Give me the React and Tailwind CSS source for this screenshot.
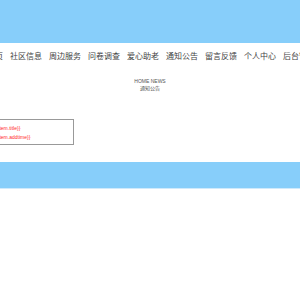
import React from 'react';

const navItems = ['首页', '社区信息', '周边服务', '问卷调查', '爱心助老', '通知公告', '留言反馈', '个人中心', '后台管理'];

const news = [{ title: '{{item.title}}', addtime: '{{item.addtime}}' }];

export default function App() {
  return (
    <div className="min-h-[300px] w-[300px] overflow-hidden bg-white font-['Liberation_Sans','Noto_Sans_CJK_SC',sans-serif]">
      {/* top banner */}
      <div className="h-[43px] w-full bg-[#87cefa]" />

      {/* nav */}
      <div className="flex h-[27px] items-center justify-center whitespace-nowrap pl-[2px]">
        <div className="flex shrink-0 gap-[7px] text-[8px] leading-none text-[#444]">
          {navItems.map((item) => (
            <span key={item}>{item}</span>
          ))}
        </div>
      </div>

      {/* title */}
      <div className="mt-[8px] flex flex-col items-center text-[5px] leading-[7px] text-[#555]">
        <span>HOME NEWS</span>
        <span>通知公告</span>
      </div>

      {/* list */}
      <div className="mt-[27px] flex">
        {news.map((item, i) => (
          <div
            key={i}
            className="-ml-[22px] flex h-[26px] w-[96px] flex-col justify-center gap-[3px] border border-[#999] pl-[16px] text-[5px] leading-[6px] text-[#ff2a2a]"
          >
            <span>{item.title}</span>
            <span>{item.addtime}</span>
          </div>
        ))}
      </div>

      {/* footer banner */}
      <div className="mt-[17px] h-[27px] w-full border-b border-[#cfeafc] bg-[#87cefa]" />
    </div>
  );
}
